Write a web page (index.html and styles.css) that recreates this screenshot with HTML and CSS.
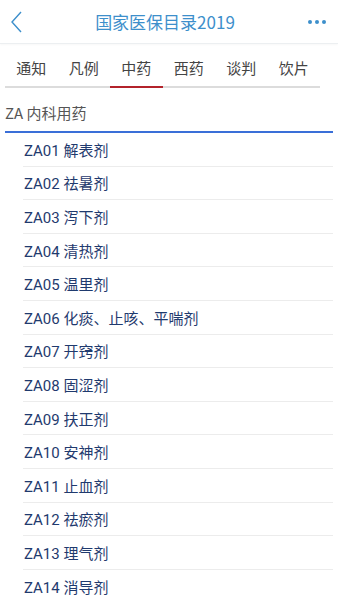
FILE: index.html
```html
<!DOCTYPE html>
<html lang="zh">
<head>
<meta charset="utf-8">
<link rel="stylesheet" href="styles.css">
</head>
<body>
<div class="page">
  <header class="topbar">
    <svg class="back" width="14" height="24" viewBox="0 0 14 24"><path d="M12 2 L3 12 L12 22" fill="none" stroke="#3d8fcb" stroke-width="1.4"/></svg>
    <h1 class="title">国家医保目录2019</h1>
    <svg class="more" width="20" height="6" viewBox="0 0 20 6"><circle cx="3" cy="3" r="2" fill="#3d8fcb"/><circle cx="10" cy="3" r="2" fill="#3d8fcb"/><circle cx="17" cy="3" r="2" fill="#3d8fcb"/></svg>
  </header>
  <nav class="tabs">
    <span class="tab">通知</span>
    <span class="tab">凡例</span>
    <span class="tab active">中药</span>
    <span class="tab">西药</span>
    <span class="tab">谈判</span>
    <span class="tab">饮片</span>
  </nav>
  <div class="section">ZA 内科用药</div>
  <ul class="list">
    <li>ZA01 解表剂</li>
    <li>ZA02 祛暑剂</li>
    <li>ZA03 泻下剂</li>
    <li>ZA04 清热剂</li>
    <li>ZA05 温里剂</li>
    <li>ZA06 化痰、止咳、平喘剂</li>
    <li>ZA07 开窍剂</li>
    <li>ZA08 固涩剂</li>
    <li>ZA09 扶正剂</li>
    <li>ZA10 安神剂</li>
    <li>ZA11 止血剂</li>
    <li>ZA12 祛瘀剂</li>
    <li>ZA13 理气剂</li>
    <li>ZA14 消导剂</li>
  </ul>
</div>
</body>
</html>
```
FILE: styles.css
```css
html, body {
  margin: 0;
  padding: 0;
  background: #fff;
}
body {
  font-family: "Roboto", "Noto Sans CJK SC", sans-serif;
  width: 338px;
  height: 600px;
  overflow: hidden;
}
.topbar {
  height: 43px;
  border-bottom: 1px solid #eceff1;
  display: flex;
  align-items: center;
  justify-content: space-between;
  padding: 0 10px 0 9px;
  box-shadow: 0 1px 2px rgba(0,0,0,0.03);
}
.back { display: block; }
.more { display: block; margin-right: 1px; }
.title {
  margin: 0;
  font-weight: normal;
  font-size: 17px;
  color: #3d8fcb;
  font-family: "Noto Sans CJK SC", sans-serif;
  letter-spacing: 0;
}
.tabs {
  margin: 1px 18px 0 5px;
  height: 43px;
  border-bottom: 2px solid #dcdcdc;
  display: flex;
  align-items: stretch;
  box-sizing: border-box;
}
.tab {
  flex: 0 0 52.5px;
  display: flex;
  align-items: center;
  justify-content: center;
  font-size: 15px;
  color: #444;
  font-family: "Noto Sans CJK SC", sans-serif;
  margin-bottom: -2px;
  border-bottom: 2px solid transparent;
  padding-top: 4px;
}
.tab.active {
  border-bottom-color: #b3232b;
}
.section {
  margin: 0 5px;
  height: 45px;
  box-sizing: border-box;
  padding-top: 6px;
  display: flex;
  align-items: center;
  font-size: 15px;
  color: #555;
  border-bottom: 2px solid #3a6fd8;
  font-family: "Noto Sans CJK SC", sans-serif;
}
.list {
  list-style: none;
  margin: 0 5px 0 23px;
  padding: 0;
}
.list li {
  height: 32.6px;
  border-bottom: 1px solid #ececec;
  display: flex;
  align-items: center;
  font-size: 15px;
  color: #1f3a6e;
  padding-left: 1px;
  box-sizing: content-box;
}
```
